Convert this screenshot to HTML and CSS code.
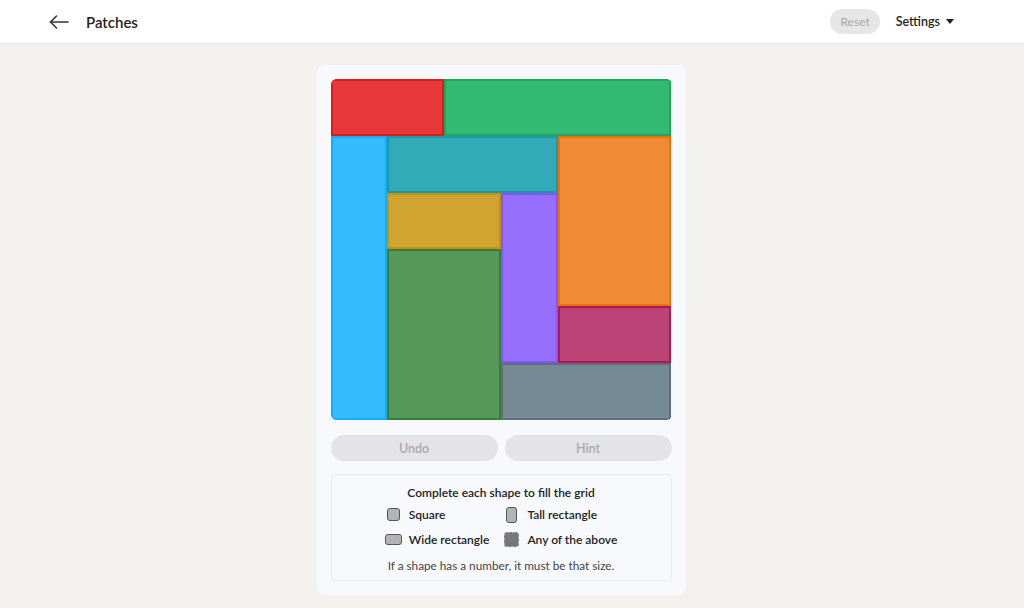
FILE: index.html
```html
<!DOCTYPE html>
<html lang="en">
<head>
  <meta charset="UTF-8">
  <meta name="viewport" content="width=device-width, initial-scale=1.0">
  <title>Patches</title>
  <link rel="stylesheet" href="styles.css">
</head>
<body>
  <header class="topbar">
    <div class="topbar-left">
      <button class="back-btn" aria-label="Back">
        <svg width="20" height="14" viewBox="0 0 20 14" fill="none" stroke="#333" stroke-width="1.6" stroke-linecap="round" stroke-linejoin="round">
          <path d="M19 7H1.5"/>
          <path d="M7.5 1L1.5 7l6 6"/>
        </svg>
      </button>
      <h1 class="title">Patches</h1>
    </div>
    <div class="topbar-right">
      <button class="reset-btn" disabled>Reset</button>
      <button class="settings-btn">Settings <span class="caret"></span></button>
    </div>
  </header>

  <main class="page">
    <div class="card">
      <div class="board">
        <div class="piece red" style="grid-area: 1 / 1 / 2 / 3"></div>
        <div class="piece green" style="grid-area: 1 / 3 / 2 / 7"></div>
        <div class="piece blue" style="grid-area: 2 / 1 / 7 / 2"></div>
        <div class="piece teal" style="grid-area: 2 / 2 / 3 / 5"></div>
        <div class="piece orange" style="grid-area: 2 / 5 / 5 / 7"></div>
        <div class="piece gold" style="grid-area: 3 / 2 / 4 / 4"></div>
        <div class="piece purple" style="grid-area: 3 / 4 / 6 / 5"></div>
        <div class="piece moss" style="grid-area: 4 / 2 / 7 / 4"></div>
        <div class="piece pink" style="grid-area: 5 / 5 / 6 / 7"></div>
        <div class="piece slate" style="grid-area: 6 / 4 / 7 / 7"></div>
      </div>

      <div class="actions">
        <button class="action-btn" disabled>Undo</button>
        <button class="action-btn" disabled>Hint</button>
      </div>

      <div class="legend">
        <p class="legend-title">Complete each shape to fill the grid</p>
        <div class="legend-grid">
          <div class="legend-item"><span class="shape-box"><span class="shape square"></span></span>Square</div>
          <div class="legend-item"><span class="shape-box"><span class="shape tall"></span></span>Tall rectangle</div>
          <div class="legend-item"><span class="shape-box"><span class="shape wide"></span></span>Wide rectangle</div>
          <div class="legend-item"><span class="shape-box"><span class="shape any"></span></span>Any of the above</div>
        </div>
        <p class="legend-note">If a shape has a number, it must be that size.</p>
      </div>
    </div>
  </main>
</body>
</html>
```

FILE: styles.css
```css
* {
  box-sizing: border-box;
}
body {
  margin: 0;
  font-family: Lato, 'Noto Sans', sans-serif;
  background: #f2f1ee;
  color: #222;
}
button {
  font-family: inherit;
  border: none;
  background: none;
  padding: 0;
  cursor: pointer;
}

/* Top bar */
.topbar {
  height: 44px;
  background: #fff;
  border-bottom: 1px solid #e6e6e6;
  display: flex;
  align-items: center;
  justify-content: space-between;
  padding: 0 70px 0 49px;
}
.topbar-left {
  display: flex;
  align-items: center;
  gap: 16px;
}
.back-btn {
  display: flex;
  align-items: center;
  width: 21px;
  height: 20px;
}
.title {
  margin: 0;
  font-size: 15px;
  font-weight: 600;
  color: #222;
}
.topbar-right {
  display: flex;
  align-items: center;
  gap: 16px;
}
.reset-btn {
  height: 25px;
  padding: 0 10px;
  border-radius: 13px;
  background: #e6e6e6;
  color: #a6a6a6;
  font-size: 12px;
  cursor: default;
}
.settings-btn {
  display: flex;
  align-items: center;
  gap: 6px;
  font-size: 12.5px;
  font-weight: 600;
  color: #222;
}
.caret {
  width: 0;
  height: 0;
  border-left: 4px solid transparent;
  border-right: 4px solid transparent;
  border-top: 5px solid #222;
}

/* Puzzle card */
.page {
  display: flex;
  justify-content: center;
  padding: 21px 22px 0 0;
}
.card {
  width: 369px;
  background: #f8f9fc;
  border-radius: 8px;
  padding: 14px;
}
.board {
  display: grid;
  grid-template-columns: repeat(6, 1fr);
  grid-template-rows: repeat(6, 1fr);
  width: 341px;
  height: 341px;
  border-radius: 6px;
  overflow: hidden;
}
.piece {
  border: 2px solid;
}
.red { background: #e8383a; border-color: #d81e20; }
.green { background: #34b973; border-color: #1fa65c; }
.blue { background: #33bdfe; border-color: #18aaf2; }
.teal { background: #33aab8; border-color: #1d98a6; }
.orange { background: #f08a34; border-color: #ef6f0e; }
.gold { background: #cfa431; border-color: #c6920a; }
.purple { background: #9670fd; border-color: #8453fa; }
.moss { background: #56985a; border-color: #377e3b; }
.pink { background: #bb4376; border-color: #aa1b55; }
.slate { background: #768a95; border-color: #5e6f79; }

.actions {
  display: flex;
  gap: 7px;
  margin-top: 15px;
}
.action-btn {
  flex: 1;
  height: 26px;
  border-radius: 13px;
  background: #e4e4e6;
  color: #a8a8a8;
  font-size: 12.5px;
  font-weight: 600;
  cursor: default;
}

/* Legend */
.legend {
  margin-top: 13px;
  border: 1px solid #e8e9ee;
  border-radius: 4px;
  padding: 10px 10px 7px;
  text-align: center;
}
.legend-title {
  margin: 0 0 5px;
  font-size: 12px;
  font-weight: 600;
  color: #222;
}
.legend-grid {
  display: inline-grid;
  grid-template-columns: auto auto;
  column-gap: 14px;
  row-gap: 7px;
  text-align: left;
}
.legend-item {
  display: flex;
  align-items: center;
  gap: 7px;
  font-size: 12px;
  font-weight: 600;
  color: #222;
  height: 18px;
}
.shape-box {
  width: 17px;
  display: flex;
  justify-content: center;
}
.shape {
  display: block;
  background: #b4b4b4;
  border: 1.5px solid #555;
  border-radius: 3px;
}
.square { width: 13px; height: 13px; }
.tall { width: 11px; height: 16px; }
.wide { width: 17px; height: 11px; }
.any {
  width: 15px;
  height: 15px;
  background: #777;
  border: 1.5px dashed #aaa;
}
.legend-note {
  margin: 9px 0 0;
  font-size: 11.75px;
  color: #444;
}
```
